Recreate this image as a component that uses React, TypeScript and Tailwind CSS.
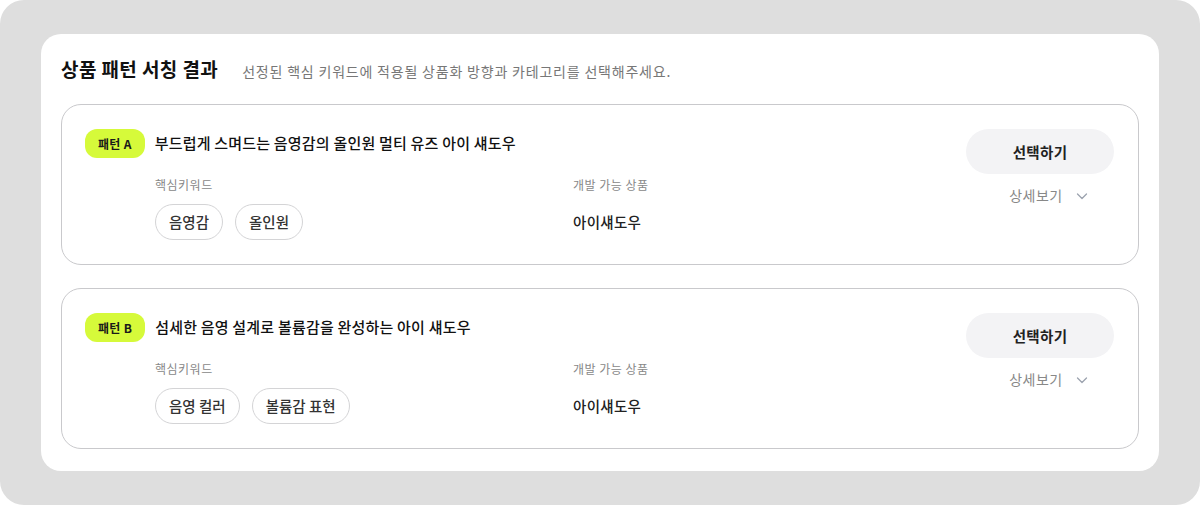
import React from "react";

interface Pattern {
  id: string;
  label: string;
  title: string;
  keywords: string[];
  product: string;
}

const PATTERNS: Pattern[] = [
  {
    id: "a",
    label: "패턴 A",
    title: "부드럽게 스며드는 음영감의 올인원 멀티 유즈 아이 섀도우",
    keywords: ["음영감", "올인원"],
    product: "아이섀도우",
  },
  {
    id: "b",
    label: "패턴 B",
    title: "섬세한 음영 설계로 볼륨감을 완성하는 아이 섀도우",
    keywords: ["음영 컬러", "볼륨감 표현"],
    product: "아이섀도우",
  },
];

function ChevronDown() {
  return (
    <svg width="14" height="14" viewBox="0 0 14 14" fill="none" className="ml-3">
      <path d="M2.5 5l4.5 4.5L11.5 5" stroke="#9ca3af" strokeWidth="1.3" strokeLinecap="round" strokeLinejoin="round" />
    </svg>
  );
}

export default function App() {
  return (
    <div
      className="w-[1200px] h-[505px] bg-white"
      style={{ fontFamily: '"Noto Sans CJK KR", "Noto Sans", sans-serif' }}
    >
      <div className="w-full h-full bg-[#dedede] rounded-[24px] pt-[34px] pl-[41px] pr-[41px]">
        {/* White panel */}
        <div className="bg-white rounded-[20px] h-[437px] px-5 pt-[21px]">
          {/* Header */}
          <div className="flex items-baseline gap-[24px] h-[28px]">
            <h2 className="text-[19px] font-bold text-[#111] tracking-[0.4px]">상품 패턴 서칭 결과</h2>
            <p className="text-[14px] text-[#777] tracking-[0.8px]">
              선정된 핵심 키워드에 적용될 상품화 방향과 카테고리를 선택해주세요.
            </p>
          </div>

          {/* Cards */}
          <div className="mt-[21px] flex flex-col gap-[23px]">
            {PATTERNS.map((p) => (
              <div
                key={p.id}
                className="h-[161px] border border-[#c9c9cc] rounded-[20px] pl-[23px] pr-[24px] pt-[24px] flex justify-between"
              >
                <div className="flex-1">
                  <div className="flex items-center gap-[10px]">
                    <span className="h-[29px] px-[13px] rounded-[12px] bg-[#d6fa3a] text-[12px] font-bold text-[#1a1a1a] flex items-center tracking-[0.3px]">
                      {p.label}
                    </span>
                    <span className="text-[15px] font-medium text-[#111] tracking-[0.2px]">{p.title}</span>
                  </div>

                  <div className="flex mt-[17px] pl-[70px]">
                    <div className="w-[418px]">
                      <div className="text-[12px] text-[#888] h-[20px] leading-[20px] tracking-[0.5px]">핵심키워드</div>
                      <div className="flex gap-[12px] mt-[9px]">
                        {p.keywords.map((k) => (
                          <span
                            key={k}
                            className="h-[36px] px-[13px] rounded-full border border-[#d4d4d6] text-[14.5px] font-medium text-[#333] flex items-center"
                          >
                            {k}
                          </span>
                        ))}
                      </div>
                    </div>
                    <div>
                      <div className="text-[12px] text-[#888] h-[20px] leading-[20px] tracking-[0.5px]">개발 가능 상품</div>
                      <div className="mt-[9px] h-[36px] flex items-center text-[14.5px] font-medium text-[#222] tracking-[0.3px]">
                        {p.product}
                      </div>
                    </div>
                  </div>
                </div>

                <div className="flex flex-col items-center w-[148px]">
                  <button className="w-[148px] h-[45px] rounded-full bg-[#f3f3f5] text-[14.5px] font-semibold text-[#222] tracking-[0.3px]">
                    선택하기
                  </button>
                  <div className="flex items-center mt-[11px] text-[14px] text-[#888] pl-[18px] tracking-[0.5px]">
                    상세보기
                    <ChevronDown />
                  </div>
                </div>
              </div>
            ))}
          </div>
        </div>
      </div>
    </div>
  );
}
